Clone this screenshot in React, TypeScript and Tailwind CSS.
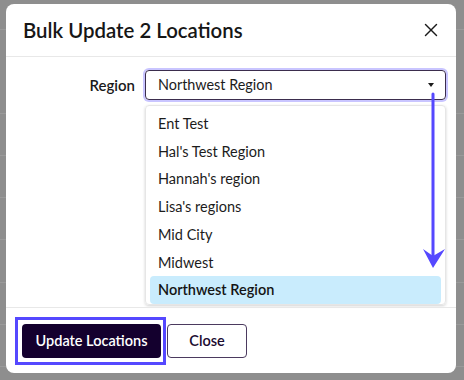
import React from 'react';
import { X } from 'lucide-react';

const regions = [
    'Ent Test',
    "Hal's Test Region",
    "Hannah's region",
    "Lisa's regions",
    'Mid City',
    'Midwest',
    'Northwest Region',
];

const selected = 'Northwest Region';

export default function App() {
    return (
        <div
            className="relative w-[464px] h-[380px] overflow-hidden bg-[#8e8e8e]"
            style={{ fontFamily: 'Lato, "Noto Sans", sans-serif' }}
        >
            {/* Backdrop rows */}
            <div className="flex flex-col">
                <div className="h-[30px] border-b border-[#9a9a9a]" />
                <div className="h-[84px] border-b border-[#9a9a9a]" />
                <div className="h-[42px] border-b border-[#9a9a9a]" />
                <div className="h-[42px] border-b border-[#9a9a9a]" />
                <div className="h-[42px] border-b border-[#9a9a9a]" />
                <div className="h-[43px] border-b border-[#9a9a9a]" />
                <div className="h-[42px] border-b border-[#9a9a9a]" />
                <div className="h-[42px] border-b border-[#9a9a9a]" />
            </div>

            {/* Modal */}
            <div className="absolute left-[6px] top-[4px] w-[450px] h-[369px] bg-white rounded-lg flex flex-col">
                {/* Header */}
                <div className="h-[53px] flex items-center justify-between pl-[17px] pr-[14px] border-b border-[#e8e8e8]">
                    <h2 className="text-[20.4px] font-semibold text-[#161616]">Bulk Update 2 Locations</h2>
                    <X className="size-[22px] text-[#1a1a1a]" strokeWidth={1.6} />
                </div>

                {/* Body */}
                <div className="flex-1 flex pt-[13px] pl-[17px] pr-[10px]">
                    <div className="w-[112px] h-[30px] flex items-center justify-end text-[15px] font-semibold text-[#1a1a1a]">
                        Region
                    </div>
                    <div className="ml-[10px] flex-1 flex flex-col gap-[5px]">
                        <div className="h-[30px] w-[301px] flex items-center justify-between pl-[12px] pr-[11px] border-[1.5px] border-[#3b2d4d] rounded-[4px] ring-2 ring-[#c9c5ff]">
                            <span className="text-[14.4px] text-[#1c1c1c]">Northwest Region</span>
                            <span className="w-0 h-0 border-l-[3px] border-r-[3px] border-t-[4px] border-l-transparent border-r-transparent border-t-[#1c1c1c]" />
                        </div>
                        <div className="w-[301px] h-[200px] border border-[#e6e6e6] rounded-[4px] shadow-[0_1px_3px_rgba(0,0,0,0.18)] flex flex-col pt-[4px] px-[4px]">
                            {regions.map(r => (
                                <div
                                    key={r}
                                    className={`h-[28px] flex items-center pl-[8px] text-[14.5px] rounded-[4px] ${
                                        r === selected ? 'bg-[#c9ecfd] font-semibold text-[#141414]' : 'text-[#1c1c1c]'
                                    }`}
                                >
                                    {r}
                                </div>
                            ))}
                        </div>
                    </div>
                </div>

                {/* Footer */}
                <div className="border-t border-[#e8e8e8] flex gap-[6px] px-[16px] pt-[16px] pb-[15px]">
                    <div className="relative">
                        <span className="absolute -left-[7px] -top-[7px] -bottom-[7px] -right-[5px] border-[3px] border-[#5548ff]" />
                        <button className="relative h-[34px] w-[139px] bg-[#14002e] text-white text-[14.5px] font-semibold rounded-[4px]">
                            Update Locations
                        </button>
                    </div>
                    <button className="h-[34px] w-[80px] border-[1.5px] border-[#4b3a5e] text-[#1a0b30] text-[14.5px] font-semibold rounded-[4px]">
                        Close
                    </button>
                </div>
            </div>

            {/* Annotation arrow */}
            <svg className="absolute left-0 top-0 pointer-events-none" width="464" height="380" viewBox="0 0 464 380">
                <line x1="433" y1="94" x2="433" y2="258" stroke="#5548ff" strokeWidth="3" strokeLinecap="round" />
                <path d="M423 249 L433 268 L445 249 L433 256 Z" fill="#5548ff" />
            </svg>
        </div>
    );
}
